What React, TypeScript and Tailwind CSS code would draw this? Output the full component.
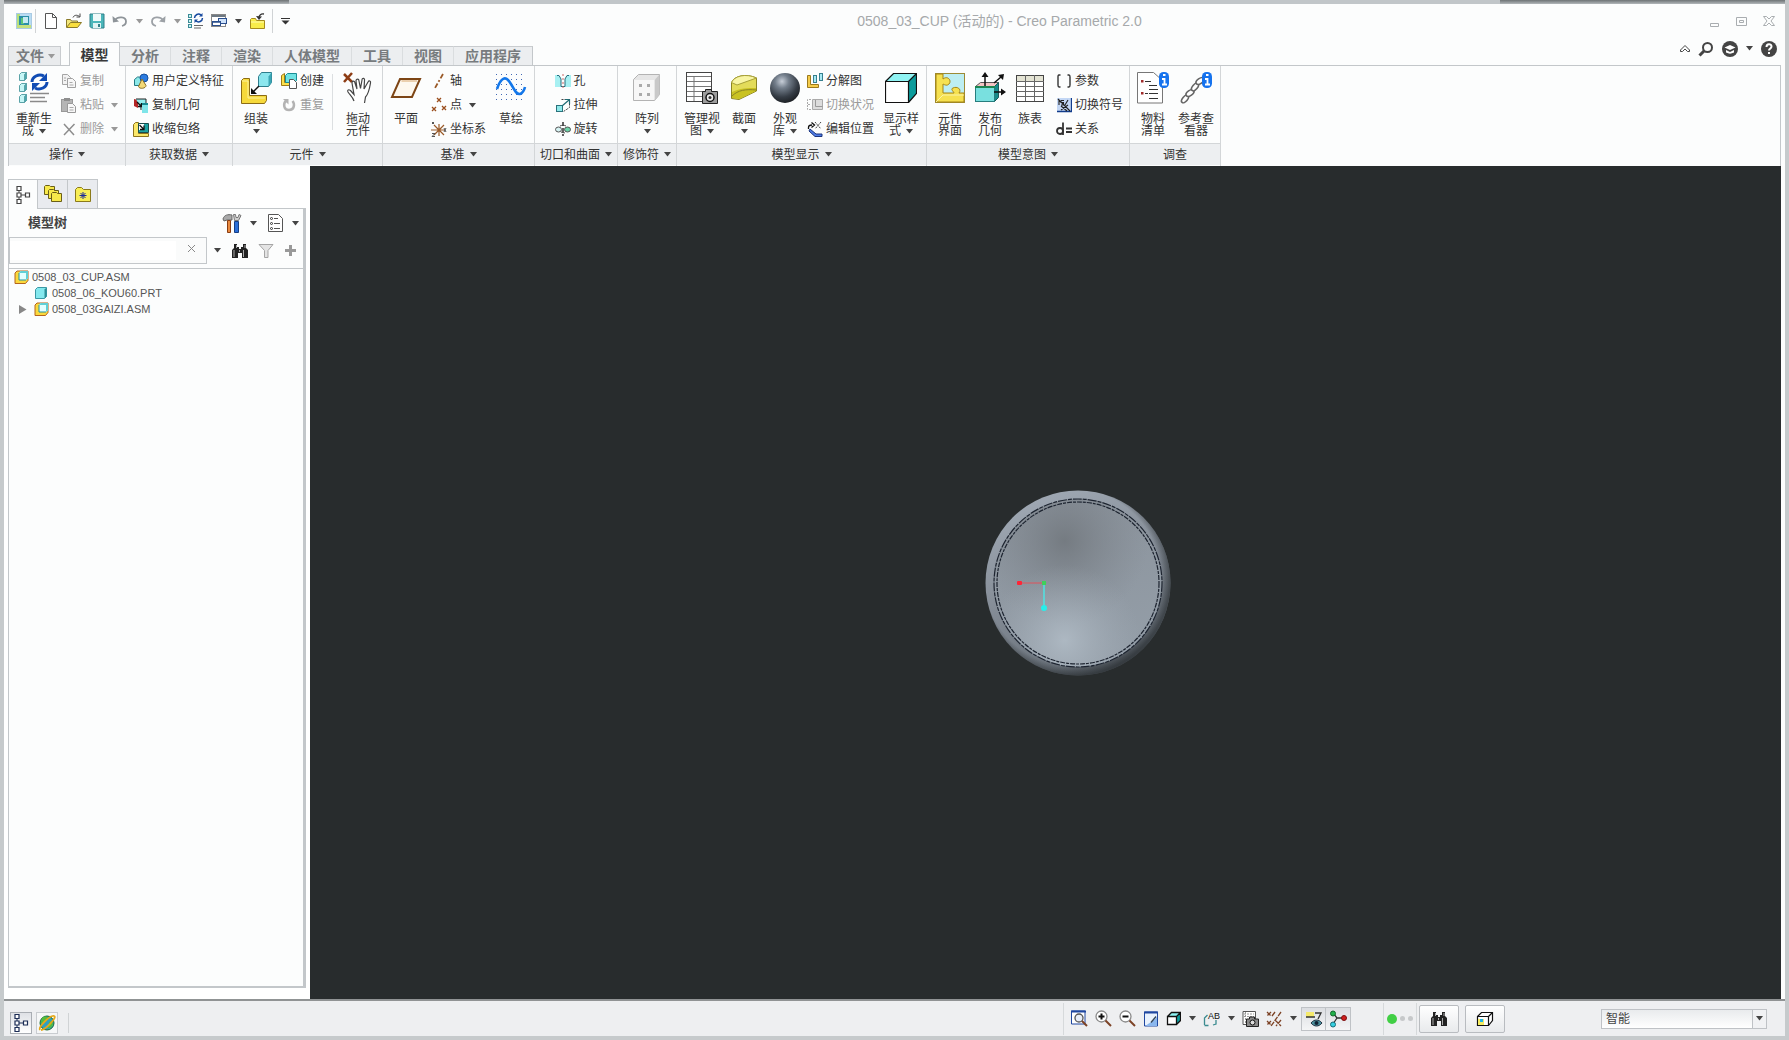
import type { ReactNode } from "react";
import clsx from "clsx";

type IconProps = { w?: number; h?: number; children: ReactNode };

function Svg({ w = 16, h = 16, children }: IconProps) {
  return (
    <svg width={w} height={h} viewBox={`0 0 ${w} ${h}`} fill="none" className="shrink-0" aria-hidden="true">
      {children}
    </svg>
  );
}

function Caret({ muted = false }: { muted?: boolean }) {
  return (
    <svg width="7" height="5" viewBox="0 0 7 5" className={clsx("shrink-0", muted ? "text-[#999]" : "text-[#444]")} aria-hidden="true">
      <path d="M0 0h7L3.5 4.5z" fill="currentColor" />
    </svg>
  );
}

/* ---------- quick access icons ---------- */

const AppIcon = () => (
  <Svg>
    <rect x=".5" y=".5" width="15" height="15" fill="#b9dcf3" stroke="#a9cbe4" />
    <path d="M1 1h3v14H1z" fill="#b5e07c" />
    <path d="M1 12h14v3H1z" fill="#c4e07c" />
    <rect x="3" y="3" width="10" height="9" fill="#2a8fa8" />
    <rect x="5" y="5" width="3" height="6" fill="#5cc47a" />
    <rect x="7" y="4" width="5" height="6" fill="#c5ebf3" />
  </Svg>
);

const NewIcon = () => (
  <Svg w={14}>
    <path d="M1.500.5h7l4 4v11h-11z" fill="#fff" stroke="#555" />
    <path d="M8.500 .5v4h4" stroke="#555" />
  </Svg>
);

const OpenIcon = () => (
  <Svg w={17}>
    <path d="M1.500 14V6.500h4l1 1.500h6v2" fill="#f4e87c" stroke="#8a7a2a" />
    <path d="M1.500 14.500l4-5h11l-4 5z" fill="#f9de3e" stroke="#8a7a2a" />
    <path d="M8 4.500c1-2.500 4-3 6.500-1M15 .5v3.500h-3.500" stroke="#444" />
  </Svg>
);

const SaveIcon = () => (
  <Svg>
    <path d="M1 1h14v14H2.500L1 13.500z" fill="#4bb6ba" stroke="#2f7f88" />
    <rect x="4" y="1" width="8" height="7" fill="#effafa" />
    <rect x="4" y="10" width="8" height="5" fill="#dff3f3" />
    <rect x="9" y="11" width="2" height="3" fill="#2f7f88" />
  </Svg>
);

const UndoIcon = () => (
  <Svg>
    <path d="M3 7c3-4 11-3.500 11 1.500 0 2.500-2 4-4 4.500" stroke="#8e9499" strokeWidth="1.800" />
    <path d="M.5 3l.5 6.500 6-1z" fill="#8e9499" />
  </Svg>
);

const RedoIcon = () => (
  <Svg>
    <path d="M13 7C10 3 2 3.500 2 8.500c0 2.500 2 4 4 4.500" stroke="#9ca1a6" strokeWidth="1.800" />
    <path d="M15.500 3L15 9.500l-6-1z" fill="#9ca1a6" />
  </Svg>
);

const RegenSmallIcon = () => (
  <Svg>
    {[1, 6, 11].map((y) => (
      <rect key={y} x=".5" y={y + 0.5} width="3" height="3" fill="#cdf4f4" stroke="#3a8a96" />
    ))}
    <path d="M6.500 5a4 4 0 0 1 6.500-3M14.500 5a4 4 0 0 1-6.500 3" stroke="#15489f" strokeWidth="1.500" />
    <path d="M14.500 0v3.500H11zM6.500 10V6.500H10z" fill="#15489f" />
    <path d="M6 12.500h9M6 15h7" stroke="#666" />
  </Svg>
);

const WindowsIcon = () => (
  <Svg>
    <rect x=".5" y="1.500" width="14" height="12" fill="#fff" stroke="#888" />
    <path d="M1 2h13v2H1z" fill="#6d7882" />
    <rect x="7.500" y="5.500" width="8" height="5" fill="#cfe3fb" stroke="#2a4f8e" />
    <rect x="1.500" y="8.500" width="8" height="4" fill="#fff" stroke="#2a4f8e" />
    <path d="M1 9h9" stroke="#2a4f8e" strokeWidth="1.500" />
  </Svg>
);

const CloseFolderIcon = () => (
  <Svg w={17}>
    <path d="M1.500 15.500v-9l1-1h4l1 2h8v8z" fill="#f8ec4a" stroke="#a68b1c" />
    <path d="M2 9h13" stroke="#fffbb0" />
    <path d="M15 1c-3-.5-5 1-5 4" stroke="#333" strokeWidth="1.300" />
    <path d="M7 3l3 4L13 3.500z" fill="#333" />
  </Svg>
);

/* ---------- small ribbon icons ---------- */

const CopyIcon = () => (
  <Svg>
    <path d="M1.500 1.500h5l3 3v7h-8z" fill="#f2f2f2" stroke="#a5a5a5" />
    <path d="M6.500 5.500h5l3 3v6h-8z" fill="#f7f7f7" stroke="#a0a0a0" />
    <path d="M8.500 9.500h3M8.500 12h4M3 5h2M3 7.500h2" stroke="#aaa" />
  </Svg>
);

const PasteIcon = () => (
  <Svg>
    <rect x=".5" y="2.500" width="11" height="12" fill="#b5b5b5" stroke="#999" />
    <rect x="3" y="1" width="6" height="3" fill="#8e8e8e" />
    <path d="M6.500 6.500h5l3 3v6h-8z" fill="#f7f7f7" stroke="#999" />
    <path d="M8.500 10.500h4M8.500 13h4" stroke="#aaa" />
  </Svg>
);

const DeleteIcon = () => (
  <Svg>
    <path d="M3 3l10 11M13.500 3L3 14" stroke="#8d8d8d" strokeWidth="1.500" />
  </Svg>
);

const UserFeatureIcon = () => (
  <Svg>
    <path d="M1.500 6.500l3-2.500h6v6l-3 2.500h-6z" fill="#8ce9e9" stroke="#247b85" />
    <circle cx="11" cy="5" r="4" fill="#2b7be0" stroke="#174f9c" />
    <path d="M5.500 13.500L9 6l4 6.500c0 3-6.500 4-7.500 1z" fill="#f3d977" stroke="#8a6f23" />
  </Svg>
);

const CopyGeomIcon = () => (
  <Svg>
    <path d="M1 2l4 1v8l-4-2z" fill="#b32626" />
    <path d="M3 2h10v5H8v6" stroke="#222" fill="#92ecec" />
    <path d="M4 5l4 4M8.500 6v3.500H5" stroke="#111" strokeWidth="1.300" />
    <path d="M9 7h6v9H9z" fill="#7fe5e9" />
    <path d="M9 7h6" stroke="#168b93" strokeWidth="2" />
  </Svg>
);

const ShrinkIcon = () => (
  <Svg>
    <path d="M.5 3.500l2-2h3v11h10v3H.5z" fill="#fbe86a" stroke="#8d741c" />
    <path d="M5.500 2.500h10v9h-10z" fill="#1ca2a2" stroke="#1a4d4d" />
    <rect x="6" y="3" width="5" height="6" fill="#fff" />
    <path d="M6.500 4l4 4M11 4.500V8.500H7" stroke="#111" strokeWidth="1.300" />
  </Svg>
);

const CreateIcon = () => (
  <Svg>
    <path d="M.5 2.500l3-2v9h8v3H.5z" fill="#fbe04b" stroke="#a07a14" />
    <path d="M4.500 2.500l2-2h9v7l-2 2h-9z" fill="#6fe3e3" stroke="#1b8d94" />
    <path d="M8.500 6.500h4l3 3v6h-7z" fill="#fff" stroke="#555" />
  </Svg>
);

const RepeatIcon = () => (
  <Svg>
    <path d="M5 4C2 6.500 2.500 13 8 13s6-6 3.500-9" stroke="#b3b3b3" strokeWidth="2.500" />
    <path d="M2 2h5.500v5.500z" fill="#b3b3b3" />
  </Svg>
);

const AxisIcon = () => (
  <Svg>
    <path d="M12 1L4 15" stroke="#9a5a28" strokeWidth="1.800" strokeDasharray="5 2 2 2" />
  </Svg>
);

const PointIcon = () => (
  <Svg>
    <path d="M6 1l4 4M10 1L6 5M1 10l4 4M5 10l-4 4M11 9l4 4M15 9l-4 4" stroke="#9a4d1c" strokeWidth="1.300" />
  </Svg>
);

const CsysIcon = () => (
  <Svg>
    <path d="M0 9h14M8 3v12M3 4l10 10M13 4L3 14" stroke="#9a5a28" strokeWidth="1.200" />
    <path d="M1 1l2 2M3 1L1 3M13 7l2 4M15 7l-2 4M1 12.500h3l-3 3h3" stroke="#555" />
  </Svg>
);

const HoleIcon = () => (
  <Svg>
    <path d="M0 2h16v12H0z" fill="#a7f0f2" />
    <path d="M3 1h10L10 6v7H6V6z" fill="#fcfdfd" />
    <path d="M2 2.500h2L6 6v7.500h4V6l2-3.500h2" stroke="#256e7c" />
    <path d="M8 1v14" stroke="#c66" strokeDasharray="2 2" />
  </Svg>
);

const ExtrudeIcon = () => (
  <Svg>
    <rect x="1.500" y="8.500" width="6" height="6" fill="#8fe9ea" stroke="#2a727c" />
    <path d="M6.500 2.500h8v8l-6 4" stroke="#444" strokeDasharray="2 1" />
    <path d="M7 9l7-6M10 2.500h4.500V7" stroke="#1f6b74" strokeWidth="1.200" />
  </Svg>
);

const RevolveIcon = () => (
  <Svg>
    <ellipse cx="3.500" cy="8.500" rx="3" ry="2.500" fill="#d5f2f2" stroke="#555" />
    <ellipse cx="12.500" cy="8.500" rx="3" ry="2.500" fill="#6cd3a8" stroke="#555" />
    <path d="M8 1v14" stroke="#111" strokeDasharray="4 2" strokeWidth="1.300" />
    <path d="M5 5c2-1 4-1 6 0M6 11l4 1" stroke="#444" />
  </Svg>
);

const ExplodeIcon = () => (
  <Svg>
    <path d="M.5 2.500h3v9h8v3H.5z" fill="#f5cc4b" stroke="#9c7a1d" />
    <rect x="6.500" y="2.500" width="3" height="7" fill="#a9e9f3" stroke="#37808f" />
    <rect x="12.500" y=".5" width="3" height="7" fill="#a9e9f3" stroke="#37808f" />
  </Svg>
);

const StatusIcon = () => (
  <Svg>
    <path d="M4 2.500H.5v10H4M1 7.500h3" stroke="#aaa" strokeDasharray="2 1" />
    <path d="M5.500 2.500h10v10h-10z" fill="#dcdcdc" stroke="#aaa" />
    <path d="M8.500 3v6.500h7" stroke="#999" />
  </Svg>
);

const EditPosIcon = () => (
  <Svg>
    <path d="M1.500 8V6.500C1.500 4.500 3 4 5 4M4.500 1.500L7.500 4l-3 2.500" stroke="#111" strokeWidth="1.300" />
    <path d="M8 1l6 7M14 1L8 8" stroke="#444" strokeDasharray="2 1" />
    <path d="M3 8l6 5h6v2.500H8L2 10z" fill="#4e7be6" stroke="#1b357d" />
  </Svg>
);

const ParamIcon = () => (
  <Svg>
    <path d="M4.500 2H3c-1 0-1 1-1 2v8c0 1 0 2 1 2h1.500M11.500 2H13c1 0 1 1 1 2v8c0 1 0 2-1 2h-1.500" stroke="#333" strokeWidth="1.400" />
  </Svg>
);

const SymbolIcon = () => (
  <Svg>
    <rect x="1" y="1" width="14" height="14" fill="#c3d7f5" />
    <path d="M1 14.500h14.500V1" stroke="#123c8c" strokeWidth="1.300" />
    <path d="M3 3v5M5 3.500h3M5 3.500v2h2.500v2.500H5M12 3l-3 5M5 9l6 5M12 8l-7 5M2 2l12 12" stroke="#222" strokeWidth="1.100" />
  </Svg>
);

const RelationIcon = () => (
  <Svg>
    <circle cx="4" cy="10" r="3" stroke="#333" strokeWidth="1.800" />
    <path d="M7 1.500V14M10 7.500h6M10 11h6" stroke="#333" strokeWidth="1.800" />
  </Svg>
);

/* ---------- large ribbon icons ---------- */

const RegenIcon = () => (
  <Svg w={32} h={32}>
    {[1, 12, 23].map((y) => (
      <g key={y} stroke="#5aa3a8">
        <path d={`M1.500 ${y + 1.5}l2-2h5v6l-2 2h-5z`} fill="#c6f6f6" />
        <path d={`M6.500 ${y + 1.5}l2-2v6l-2 2z`} fill="#4ba9ae" />
      </g>
    ))}
    <path d="M14 10a8 7 0 0 1 12-6M29 10a8 7 0 0 1-12 6" stroke="#114cb4" strokeWidth="3" />
    <path d="M29 1v8h-8zM14 19v-8h8z" fill="#114cb4" />
    <path d="M12 21.500h19M12 25.500h15M12 29.500h17" stroke="#8a8a8a" strokeWidth="1.500" />
  </Svg>
);

const AssembleIcon = () => (
  <Svg w={32} h={32}>
    <path d="M1.500 8.500l2-2h6v17h17v5l-2 3h-23z" fill="#f6d93b" stroke="#8c6c15" />
    <path d="M2 9h6v17h17" stroke="#fdf3a0" />
    <path d="M18.500 4.500l3-4h10v10l-3 4h-10z" fill="#8be6ee" stroke="#2d7d8c" />
    <path d="M28.500 4.500l3-4v10l-3 4z" fill="#3ba6b5" />
    <path d="M19 14l-6 6" stroke="#111" strokeWidth="1.500" />
    <path d="M11 16v6h6z" fill="#111" />
  </Svg>
);

const DragIcon = () => (
  <Svg w={32} h={32}>
    <path d="M2 2l8 8M10 1L2 10" stroke="#8d3d15" strokeWidth="2.500" />
    <path
      d="M12 29c-1-4-4-6-6-9-1-2 .5-3 2.500-1.500l3.500 4L10 11c0-2.500 2.500-2.500 3 0l2 6-1-8c0-2.500 3-2.500 3 0l1.500 7.500L20 8c0-2.500 3-2 2.500.5l-.5 8.500 4-7c1-2 3-1 2.500 1-1 6-2 11-5 14l-1 6"
      fill="#fff"
      stroke="#444"
      strokeWidth="1.200"
    />
  </Svg>
);

const PlaneIcon = () => (
  <Svg w={32} h={32}>
    <path d="M10 7h20l-8 18H2z" fill="#fdf8ef" stroke="#7d4515" strokeWidth="2" />
    <path d="M11.500 9h15.500" stroke="#d9a76e" />
  </Svg>
);

const SketchIcon = () => (
  <Svg w={32} h={32}>
    {[2, 7, 12, 17, 22, 27].map((y) => (
      <path key={y} d={`M1 ${y}.5h30`} stroke="#4068b5" strokeDasharray="1 4" />
    ))}
    <path d="M2 17C5 8 9 4 13 8c5 5 7 15 12 14 3-1 4-3 5-7" stroke="#1377ea" strokeWidth="2.600" />
  </Svg>
);

const PatternIcon = () => (
  <Svg w={32} h={32}>
    <path d="M2.500 7.500l5-5h21v20l-5 6h-21z" fill="#e6e6e6" stroke="#b3b3b3" />
    <path d="M24 7.500l4.500-5v20l-4.500 6z" fill="#c9c9c9" />
    <rect x="3" y="8" width="20" height="20" fill="#f7f7f7" />
    {[[8, 12], [16, 12], [8, 21], [16, 21]].map(([x, y]) => (
      <rect key={`${x}-${y}`} x={x} y={y} width="3" height="3" fill="#aaa" />
    ))}
  </Svg>
);

const ManageViewIcon = () => (
  <Svg w={32} h={32}>
    <rect x=".5" y=".5" width="25" height="29" fill="#fff" stroke="#444" />
    <path d="M1 4.500h24M1 9.500h24M1 14.500h24M1 19.500h24M1 24.500h15M8 4v25" stroke="#777" />
    <path d="M16.500 19.500h3v-2h6v2h6v12h-15z" fill="#9c9c9c" stroke="#222" />
    <circle cx="24" cy="25.500" r="4" fill="#eee" stroke="#111" strokeWidth="1.500" />
    <circle cx="24" cy="25.500" r="1.500" fill="#333" />
  </Svg>
);

const SectionIcon = () => (
  <Svg w={32} h={32}>
    <path d="M3.500 10.500C6 4 18 1 28.500 6v13L11 27.500l-7.500-1z" fill="#e3dc5a" stroke="#8b8424" />
    <path d="M3.500 10.500C6 4 18 1 28.500 6L9 13z" fill="#f8f5a4" stroke="#a8a138" />
    <path d="M4 20c8-4 16-4 24-4v3L11 27l-7-1z" fill="#c9c221" />
    <path d="M4 24c6-6 14-7 24-6" stroke="#8b8424" />
  </Svg>
);

const SphereIcon = () => (
  <Svg w={32} h={32}>
    <defs>
      <radialGradient id="sphere" cx=".4" cy=".28" r=".75">
        <stop offset="0" stopColor="#c7ced8" />
        <stop offset=".3" stopColor="#747f8c" />
        <stop offset=".7" stopColor="#353c45" />
        <stop offset="1" stopColor="#1b1e22" />
      </radialGradient>
    </defs>
    <circle cx="16" cy="16" r="15" fill="url(#sphere)" />
  </Svg>
);

const CubeIcon = () => (
  <Svg w={32} h={32}>
    <path d="M0 9.500l8-8h23.500l-8 8z" fill="#8ff3f3" />
    <path d="M23.500 9.500l8-8v20l-8 9z" fill="#0b9c9c" />
    <path d="M.5 9.500h23v21H.5z" fill="#fff" />
    <path d="M.5 9.500h23v21H.5zM.5 9.500l8-8h23v20l-8 9M23.500 9.500l8-8" stroke="#111" strokeWidth="1.200" />
  </Svg>
);

const ComponentUiIcon = () => (
  <Svg w={32} h={32}>
    <rect x="1.500" y="1.500" width="29" height="29" fill="#bdeef2" stroke="#9c8b36" />
    <path
      d="M2 2h7v5c5-4 9 2 6 5-2 2-4 1-6 0v9h11c0-1-4-4-1-5 4-2 9 1 6 5h5v9H2z"
      fill="#f6e150"
      stroke="#a58515"
    />
    <path d="M2 30l7-7h21" stroke="#fbf3a5" />
  </Svg>
);

const PublishIcon = () => (
  <Svg w={32} h={32}>
    <path d="M1.500 14.500l5-4h18l-4 4z" fill="#f5c4c4" stroke="#555" />
    <path d="M20.500 14.500l4-4v15l-4 4z" fill="#178a8a" stroke="#1a5a5a" />
    <rect x="1.500" y="14.500" width="19" height="15" fill="#79e0df" stroke="#277e7e" />
    <path d="M1 15h20" stroke="#1d8552" strokeWidth="2" />
    <path d="M11 14V3M20 11l7-6M20 20h9" stroke="#111" strokeWidth="1.500" />
    <path d="M11 0l3.500 5h-7zM30 2l-1 6-5-5zM32 20l-5 3.500v-7z" fill="#111" />
  </Svg>
);

const FamilyTableIcon = () => (
  <Svg w={32} h={32}>
    <rect x="2.500" y="3.500" width="27" height="26" fill="#fff" stroke="#444" />
    <path d="M3 4h26v5H3z" fill="#e3e3d3" />
    <path d="M2 9.500h28M2 14.500h28M2 19.500h28M2 24.500h28M11.500 3v26M20.500 3v26" stroke="#666" />
  </Svg>
);

const InfoBadge = () => (
  <>
    <rect x="22" y="0" width="10" height="16" rx="4.500" fill="#1673ee" />
    <path d="M26 3h2.500M25 7h2.500v5.500M25 12.500h5" stroke="#fff" strokeWidth="1.800" />
  </>
);

const BomIcon = () => (
  <Svg w={32} h={32}>
    <path d="M.5.500h16l9 8v22.500H.5z" fill="#fff" stroke="#777" />
    <path d="M8 9.500h6M12 13.500h8M12 17.500h9M8 21.500h3M12 21.500h9M12 26.500h9" stroke="#333" />
    <path d="M4 8h2.500v2.500H4zM4 20h2.500v2.500H4z" fill="#a02c2c" />
    <InfoBadge />
  </Svg>
);

const RefViewerIcon = () => (
  <Svg w={32} h={32}>
    <g stroke="#666" strokeWidth="1.600" fill="#fff">
      <ellipse cx="5" cy="27" rx="4.500" ry="2.500" transform="rotate(-50 5 27)" />
      <ellipse cx="10" cy="21" rx="4.500" ry="2.500" transform="rotate(-35 10 21)" />
      <ellipse cx="15" cy="15" rx="4.500" ry="2.500" transform="rotate(-50 15 15)" />
      <ellipse cx="20" cy="9" rx="4.500" ry="2.500" transform="rotate(-35 20 9)" />
    </g>
    <InfoBadge />
  </Svg>
);

/* ---------- tree and status icons ---------- */

const TreeIcon = ({ color = "#444" }: { color?: string }) => (
  <Svg w={16} h={20}>
    <path d="M4 5v3M4 12v3M6 10h4" stroke={color} />
    <path d="M2 1.500h4v4H2zM2 8h4v4H2zM2 14.500h4v4H2zM10.500 8h4v4h-4z" fill="#fff" stroke={color} strokeWidth="1.200" />
  </Svg>
);

const FoldersIcon = () => (
  <Svg w={20} h={20}>
    {[0, 4, 7].map((d) => (
      <path key={d} d={`M${d + 1}.5 ${d + 10}.5v-8l1-1h4l1 1h4v8z`} fill="#f8e94a" stroke="#6b5f17" />
    ))}
  </Svg>
);

const FavFolderIcon = () => (
  <Svg w={18} h={18}>
    <path d="M1.500 16.500v-12l2-2h4l2 2h7v12z" fill="#f8ee55" stroke="#8b7a1b" />
    <path d="M9 7v7M5.500 10.500h7M6.500 8l5 5M11.500 8l-5 5" stroke="#1b2b9a" />
  </Svg>
);

const ToolsIcon = () => (
  <Svg w={20} h={20}>
    <path d="M1 6c1-4 5-5 9-4v5H5L2 8z" fill="#a9a9a9" stroke="#666" />
    <path d="M5.500 7.500h3v12h-3z" fill="#e98a3f" stroke="#8a3d11" />
    <path d="M12.500 8.500h4v11h-4z" fill="#2b6fd8" stroke="#173f85" />
    <path d="M11.500 1.500l1 6h4l2.500-5-2-1-1 3h-2l-.5-3z" fill="#cfcfcf" stroke="#777" />
  </Svg>
);

const TreeSettingsIcon = () => (
  <Svg w={17} h={20}>
    <path d="M1.500 1.500h10l4 4v13h-14z" fill="#fff" stroke="#555" />
    <path d="M7 5.500h4M7 10.500h6M7 15.500h6" stroke="#555" />
    <circle cx="4.500" cy="5.500" r="1" stroke="#333" />
    <circle cx="4.500" cy="10.500" r="1" stroke="#333" />
    <circle cx="4.500" cy="15.500" r="1" stroke="#333" />
  </Svg>
);

const BinocularsIcon = () => (
  <Svg w={18}>
    <path d="M3 5V1h3v3h2v2h2V4h2V1h3v4l2 2v8h-6v-5H7v5H1V7z" fill="#222" />
    <path d="M3 7v7M5.500 2v3M12.500 7v7M14 2v3M8.500 7v2" stroke="#aaa" />
  </Svg>
);

const FunnelIcon = () => (
  <Svg>
    <path d="M1 1.500h14l-5 6v7H6.500v-7z" fill="#e4e4e4" stroke="#a5a5a5" />
  </Svg>
);

const PlusIcon = () => (
  <Svg w={13} h={13}>
    <path d="M5 1h3v4h4v3H8v4H5V8H1V5h4z" fill="#999" />
  </Svg>
);

const AsmIcon = () => (
  <Svg w={15} h={14}>
    <path d="M1 3l2-2h11v9.500L11.500 13.500H1z" fill="#fbd93d" stroke="#b5651d" />
    <path d="M5 3l1.500-2H14v7.500L12 10H5z" fill="#e2ffff" />
    <path d="M5 3l1.500-2H14l-2 2zM12 3l2-2v7.500L12 10z" fill="#5fd0d6" />
    <path d="M5 3v7h7" stroke="#25929c" />
  </Svg>
);

const PartIcon = () => (
  <Svg w={15} h={14}>
    <path d="M1.500 3.500L3.500 1.500h9v9l-2 2h-9z" fill="#84e8ee" stroke="#3b98a5" />
    <path d="M10.500 3.500l2-2v9l-2 2z" fill="#2a8e97" />
  </Svg>
);

const GlobeIcon = () => (
  <Svg w={18} h={18}>
    <circle cx="9" cy="9" r="7" fill="#2f9fc1" stroke="#1b6d2e" />
    <path d="M4 4c2-2 5-2 6 0s-3 3-4 5-3 1-3-1zM11 8c2-1 4 0 4 2s-3 5-5 4z" fill="#55bd3c" />
    <path d="M2 16C0 13 12 1 16 2s-9 14-13 14" stroke="#e6a817" strokeWidth="1.800" />
  </Svg>
);

const Magnifier = ({ sign }: { sign: string }) => (
  <Svg w={17} h={17}>
    <circle cx="6.500" cy="6.500" r="5.500" fill="#fff" stroke="#8b8b8b" strokeWidth="1.300" />
    <path d={sign} stroke="#111" strokeWidth="2" />
    <path d="M10.500 10.500l5.500 5.500" stroke="#7d4326" strokeWidth="2" />
  </Svg>
);

const RefitIcon = () => (
  <Svg w={17} h={17}>
    <path d="M.5 1h13.500v13H.5z" fill="#fff" stroke="#1f47a0" />
    <path d="M0 1.500h15" stroke="#1f47a0" strokeWidth="2" />
    <circle cx="8" cy="8" r="4" fill="#e8eef8" stroke="#555" strokeWidth="1.300" />
    <path d="M11 11l5 5" stroke="#7d4326" strokeWidth="2" />
  </Svg>
);

const RepaintIcon = () => (
  <Svg>
    <path d="M1.500 1h13v14h-13z" fill="#e9f2fd" stroke="#1f47a0" />
    <path d="M1 1.500h14" stroke="#1f47a0" strokeWidth="2" />
    <path d="M3 15c2-3 7-4 11-9v9z" fill="#8ab7ee" />
    <path d="M8 11.500l5-6" stroke="#345" strokeWidth="1.300" />
  </Svg>
);

const SmallCubeIcon = () => (
  <Svg w={15} h={15}>
    <path d="M1.500 5.500l4-4h9l-4 4z" fill="#8ff3f3" />
    <path d="M10.500 5.500l4-4v8l-4 4z" fill="#0b9c9c" />
    <path d="M1.500 5.500h9v8h-9z" fill="#fff" />
    <path d="M1.500 5.500h9v8h-9zM1.500 5.500l4-4h9v8l-4 4M10.500 5.500l4-4" stroke="#111" strokeWidth="1.300" />
  </Svg>
);

const SavedViewsIcon = () => (
  <svg width="17" height="16" viewBox="0 0 17 16" fill="none" className="shrink-0" aria-hidden="true">
    <path d="M1.500 14V7l3-3M1.500 14.500h4M13 9v4l-3 1" stroke="#3b8b90" strokeWidth="1.300" />
    <text x="5" y="8" fontSize="9" fontFamily="Liberation Sans, sans-serif" fill="#111">AB</text>
  </svg>
);

const CameraListIcon = () => (
  <Svg w={17}>
    <path d="M1 .5h12.500v13H1z" fill="#fff" stroke="#555" />
    <path d="M2 3h10M2 5.500h10M3.500 1v12" stroke="#999" strokeDasharray="2 1" />
    <path d="M4.500 8h3V6h5v2h4v7.500h-12z" fill="#8b8b8b" stroke="#222" />
    <circle cx="10.500" cy="11.500" r="2.500" fill="#ddd" stroke="#111" />
  </Svg>
);

const DatumIcon = () => (
  <Svg>
    <path d="M1 1l4 4M5 1L1 5M15 1L5 15M1 10l4 4M5 10l-4 4M9 9l6 6M15 9l-5 6M9 1l-3 4" stroke="#7d4326" strokeWidth="1.300" strokeDasharray="5 1" />
  </Svg>
);

const AnnotationIcon = () => (
  <Svg w={18} h={18}>
    <path d="M1 2h8v5H1z" fill="#f5e96b" />
    <path d="M1 7h9M10 3h6l-3 6" stroke="#333" strokeWidth="1.300" />
    <path d="M6 13c3-4 8-4 11 0-3 4-8 4-11 0z" fill="#4a8f9c" stroke="#234" />
    <circle cx="11.500" cy="13" r="2" fill="#123" />
  </Svg>
);

const SpinCenterIcon = () => (
  <Svg w={18} h={18}>
    <path d="M4 3l4 5h6M8 8l-4 6" stroke="#333" strokeWidth="1.300" />
    <circle cx="4" cy="3.500" r="2.500" fill="#22b14c" stroke="#136b2d" />
    <circle cx="15" cy="8" r="2.500" fill="#d01f1f" stroke="#7d1010" />
    <circle cx="4" cy="14.500" r="2.500" fill="#36cfe0" stroke="#176c78" />
  </Svg>
);

const SelectBoxIcon = () => (
  <Svg w={18}>
    <path d="M1.500 5.500l4-4h11v8l-4 5h-11z" fill="#fff" stroke="#111" strokeWidth="1.200" />
    <rect x="2" y="8" width="6" height="6" fill="#f6ec62" />
    <rect x="4" y="8" width="3" height="3" fill="#1fb6e8" />
    <path d="M1.500 5.500h11v9M12.500 5.500l4-4" stroke="#111" strokeWidth="1.200" />
  </Svg>
);

/* ---------- ribbon building blocks ---------- */

function Group({ title, menu = true, className, children }: { title: string; menu?: boolean; className?: string; children: ReactNode }) {
  return (
    <section className="flex flex-col border-r border-[#d3d6d8]">
      <div className={clsx("flex h-[77px] items-start", className)}>{children}</div>
      <button className="flex h-[22px] items-center justify-center gap-[5px] border-t border-[#d3d6d8] bg-[#edeff1] px-[5px] text-[#333]">
        {title}
        {menu && <Caret />}
      </button>
    </section>
  );
}

function Big({ icon, lines, menu = false, narrow = false }: { icon: ReactNode; lines: string[]; menu?: boolean; narrow?: boolean }) {
  return (
    <button className={clsx("flex flex-col items-center pt-1.5 leading-3", narrow ? "w-10" : "w-[42px]")}>
      {icon}
      <span className="mt-[9px] flex h-3 items-center whitespace-nowrap">{lines[0]}</span>
      <span className="flex h-3 items-center gap-[5px] whitespace-nowrap">
        {lines[1]}
        {menu && <Caret />}
      </span>
    </button>
  );
}

type SmallItem = { icon: ReactNode; label: string; menu?: boolean; off?: boolean };

function SmallColumn({ items, className }: { items: SmallItem[]; className?: string }) {
  return (
    <div className={clsx("flex flex-col pt-[3px]", className)}>
      {items.map((item) => (
        <button
          key={item.label}
          disabled={item.off}
          className={clsx("flex h-6 items-center gap-[3px] whitespace-nowrap", item.off && "text-[#9a9a9a]")}
        >
          {item.icon}
          {item.label}
          {item.menu && (
            <span className="ml-1">
              <Caret muted={item.off} />
            </span>
          )}
        </button>
      ))}
    </div>
  );
}

const tabs = ["分析", "注释", "渲染", "人体模型", "工具", "视图", "应用程序"];

function TitleBar() {
  return (
    <header className="flex h-[34px] items-center pl-3 pr-2.5">
      <AppIcon />
      <span className="ml-[3px] h-6 w-px bg-[#d0d3d5]" />
      <div className="ml-2 flex items-center gap-[7px]">
        <button aria-label="新建"><NewIcon /></button>
        <button aria-label="打开"><OpenIcon /></button>
        <button aria-label="保存"><SaveIcon /></button>
        <button aria-label="撤消" className="flex items-center gap-2"><UndoIcon /><Caret muted /></button>
        <button aria-label="重做" className="flex items-center gap-2"><RedoIcon /><Caret muted /></button>
        <button aria-label="重新生成"><RegenSmallIcon /></button>
        <button aria-label="窗口" className="flex items-center gap-2"><WindowsIcon /><Caret /></button>
        <button aria-label="关闭窗口"><CloseFolderIcon /></button>
      </div>
      <span className="ml-1.5 h-6 w-px bg-[#d0d3d5]" />
      <button aria-label="自定义" className="ml-2">
        <Svg w={9} h={7}>
          <path d="M0 .5h9" stroke="#333" />
          <path d="M.5 2.500h8l-4 4z" fill="#333" />
        </Svg>
      </button>
      <h1 className="flex-1 text-center text-sm text-[#a6a9ab]">0508_03_CUP (活动的) - Creo Parametric 2.0</h1>
      <div className="flex items-center gap-4 text-[#a9adb0]">
        <button aria-label="最小化">
          <Svg w={11} h={11}><path d="M1.500 7.500h8v3h-8z" stroke="currentColor" /></Svg>
        </button>
        <button aria-label="还原">
          <Svg w={11} h={9}><path d="M.5.500h10v8H.5zM3.500 3.500h4v2h-4z" stroke="currentColor" /></Svg>
        </button>
        <button aria-label="关闭">
          <Svg w={12} h={10}>
            <path d="M.5.500h3L6 3 8.500.5h3L8 5l3.500 4.500h-3L6 7 3.500 9.500h-3L4 5z" stroke="currentColor" />
          </Svg>
        </button>
      </div>
    </header>
  );
}

function TabBar() {
  return (
    <nav className="flex h-[27px] items-end pl-1 pr-2 text-sm font-bold text-[#777b7e]">
      <button className="flex h-[19px] w-[53px] items-center gap-1 border border-b-0 border-[#c9cccf] bg-[#e9ebed] pl-[7px]">
        文件
        <Caret muted />
      </button>
      <button className="relative z-10 -mb-px ml-2 flex h-6 w-[51px] items-center justify-center border border-b-0 border-[#c3c7ca] bg-[#fcfdfd] text-[#3a3a3a]">
        模型
      </button>
      {tabs.map((tab) => (
        <button key={tab} className="flex h-[19px] items-center border-r border-t border-r-[#dadddf] border-t-[#c9cccf] bg-[#eceef0] px-[11px] last-of-type:border-r-[#c3c7ca]">
          {tab}
        </button>
      ))}
      <div className="ml-auto flex h-full items-center gap-2 pb-1.5 text-[#444]">
        <button aria-label="最小化功能区">
          <Svg w={10} h={8}><path d="M.5 5L5 .5 9.500 5v1.500h-2L5 4 2.500 6.500h-2z" stroke="currentColor" /></Svg>
        </button>
        <button aria-label="搜索">
          <Svg>
            <circle cx="9.500" cy="6.500" r="4.500" stroke="currentColor" strokeWidth="2" />
            <path d="M6 10l-4.500 4.500" stroke="currentColor" strokeWidth="3" />
          </Svg>
        </button>
        <button aria-label="学习" className="flex items-center gap-2">
          <Svg>
            <circle cx="8" cy="8" r="8" fill="currentColor" />
            <path d="M2.500 6.500L8 4l5.500 2.500L8 9zM4 9v2.500c3 1.500 5 1.500 8 0V9l-4 2z" fill="#fff" />
          </Svg>
          <Caret />
        </button>
        <button aria-label="帮助">
          <Svg>
            <circle cx="8" cy="8" r="8" fill="currentColor" />
            <path d="M5.500 6c0-3.500 5-3.500 5-.5 0 2-2.500 2-2.500 4M8 11v2" stroke="#fff" strokeWidth="2" />
          </Svg>
        </button>
      </div>
    </nav>
  );
}

function Ribbon() {
  return (
    <div className="mx-1 flex h-[101px] border border-b-0 border-[#c3c7ca]">
      <Group title="操作" className="pl-1 pr-[7px]">
        <Big icon={<RegenIcon />} lines={["重新生", "成"]} menu />
        <SmallColumn
          className="ml-1.5"
          items={[
            { icon: <CopyIcon />, label: "复制", off: true },
            { icon: <PasteIcon />, label: "粘贴", menu: true, off: true },
            { icon: <DeleteIcon />, label: "删除", menu: true, off: true },
          ]}
        />
      </Group>
      <Group title="获取数据" className="pl-[7px] pr-2">
        <SmallColumn
          items={[
            { icon: <UserFeatureIcon />, label: "用户定义特征" },
            { icon: <CopyGeomIcon />, label: "复制几何" },
            { icon: <ShrinkIcon />, label: "收缩包络" },
          ]}
        />
      </Group>
      <Group title="元件" className="pl-0.5 pr-[3px]">
        <Big icon={<AssembleIcon />} lines={["组装", ""]} menu />
        <SmallColumn
          className="ml-1"
          items={[
            { icon: <CreateIcon />, label: "创建" },
            { icon: <RepeatIcon />, label: "重复", off: true },
          ]}
        />
        <span className="ml-2 mr-1 mt-2 h-14 w-px bg-[#dcdfe1]" />
        <Big icon={<DragIcon />} lines={["拖动", "元件"]} />
      </Group>
      <Group title="基准" className="gap-1 px-0.5">
        <Big icon={<PlaneIcon />} lines={["平面", ""]} />
        <SmallColumn
          items={[
            { icon: <AxisIcon />, label: "轴" },
            { icon: <PointIcon />, label: "点", menu: true },
            { icon: <CsysIcon />, label: "坐标系" },
          ]}
        />
        <Big icon={<SketchIcon />} lines={["草绘", ""]} />
      </Group>
      <Group title="切口和曲面" className="justify-center">
        <SmallColumn
          items={[
            { icon: <HoleIcon />, label: "孔" },
            { icon: <ExtrudeIcon />, label: "拉伸" },
            { icon: <RevolveIcon />, label: "旋转" },
          ]}
        />
      </Group>
      <Group title="修饰符" className="justify-center">
        <Big icon={<PatternIcon />} lines={["阵列", ""]} menu />
      </Group>
      <Group title="模型显示" className="px-1">
        <Big icon={<ManageViewIcon />} lines={["管理视", "图"]} menu />
        <Big icon={<SectionIcon />} lines={["截面", ""]} menu />
        <Big icon={<SphereIcon />} lines={["外观", "库"]} menu narrow />
        <SmallColumn
          className="ml-0.5 mr-1.5"
          items={[
            { icon: <ExplodeIcon />, label: "分解图" },
            { icon: <StatusIcon />, label: "切换状况", off: true },
            { icon: <EditPosIcon />, label: "编辑位置" },
          ]}
        />
        <Big icon={<CubeIcon />} lines={["显示样", "式"]} menu />
      </Group>
      <Group title="模型意图" className="pl-[3px] pr-1.5">
        <Big icon={<ComponentUiIcon />} lines={["元件", "界面"]} narrow />
        <Big icon={<PublishIcon />} lines={["发布", "几何"]} narrow />
        <Big icon={<FamilyTableIcon />} lines={["族表", ""]} narrow />
        <SmallColumn
          className="ml-1.5"
          items={[
            { icon: <ParamIcon />, label: "参数" },
            { icon: <SymbolIcon />, label: "切换符号" },
            { icon: <RelationIcon />, label: "关系" },
          ]}
        />
      </Group>
      <Group title="调查" menu={false} className="gap-px pl-0.5 pr-[3px]">
        <Big icon={<BomIcon />} lines={["物料", "清单"]} />
        <Big icon={<RefViewerIcon />} lines={["参考查", "看器"]} />
      </Group>
    </div>
  );
}

function Sidebar() {
  return (
    <aside className="flex w-[306px] shrink-0 flex-col bg-white px-1 pb-[11px] pt-[13px]">
      <div className="relative z-10 -mb-px flex h-[30px] items-stretch">
        <button aria-label="模型树" className="flex w-[30px] items-center justify-center border border-b-0 border-[#c3c7ca] bg-[#fcfdfd]"><TreeIcon /></button>
        <button aria-label="文件夹浏览器" className="flex w-[30px] items-center justify-center border border-l-0 border-[#c3c7ca] bg-[#e9ebef]"><FoldersIcon /></button>
        <button aria-label="收藏夹" className="flex w-[30px] items-center justify-center border border-l-0 border-[#c3c7ca] bg-[#e9ebef]"><FavFolderIcon /></button>
      </div>
      <div className="flex flex-1 flex-col border border-b-2 border-r-[3px] border-[#c3c7ca] bg-[#fcfdfd]">
        <div className="flex h-7 items-center pl-[19px] pr-1">
          <h2 className="flex-1 text-[13px] font-bold text-[#444]">模型树</h2>
          <button aria-label="设置" className="flex items-center gap-2"><ToolsIcon /><Caret /></button>
          <button aria-label="显示" className="ml-2.5 flex items-center gap-2"><TreeSettingsIcon /><Caret /></button>
        </div>
        <div className="flex h-[27px] items-center pr-1.5">
          <label className="flex h-full w-[198px] items-center border border-[#c3c7ca] bg-[#fafbfb]">
            <input aria-label="搜索模型树" className="h-[19px] w-full min-w-0 flex-1 bg-white pl-2 outline-none" />
            <button aria-label="清除" className="flex w-[30px] justify-center pb-1">
              <Svg w={9} h={9}><path d="M1 1l7 7M8 1L1 8" stroke="#888" /></Svg>
            </button>
          </label>
          <div className="ml-[7px] flex flex-1 items-center justify-between">
            <button aria-label="搜索选项"><Caret /></button>
            <button aria-label="查找"><BinocularsIcon /></button>
            <button aria-label="过滤"><FunnelIcon /></button>
            <button aria-label="添加"><PlusIcon /></button>
          </div>
        </div>
        <ul className="mt-1 flex-1 border-t border-[#c3c7ca] text-[11px] text-[#555]">
          <li className="flex h-4 items-center gap-[3px] pl-[5px]"><AsmIcon />0508_03_CUP.ASM</li>
          <li className="flex h-4 items-center gap-[3px] pl-[25px]"><PartIcon />0508_06_KOU60.PRT</li>
          <li className="flex h-4 items-center gap-[3px] pl-2.5">
            <button aria-label="展开" className="w-3">
              <Svg w={8} h={9}><path d="M0 0v9l7.500-4.500z" fill="#888" /></Svg>
            </button>
            <AsmIcon />0508_03GAIZI.ASM
          </li>
        </ul>
      </div>
    </aside>
  );
}

function CupModel() {
  return (
    <svg width="190" height="190" viewBox="-95 -95 190 190" fill="none" role="img" aria-label="0508_03_CUP">
      <defs>
        <linearGradient id="rim" x1=".3" y1="0" x2=".7" y2="1">
          <stop offset="0" stopColor="#a0a9b4" />
          <stop offset=".5" stopColor="#828a94" />
          <stop offset=".85" stopColor="#6a727b" />
          <stop offset="1" stopColor="#4a5057" />
        </linearGradient>
        <radialGradient id="edge" cx=".47" cy=".47" r=".53">
          <stop offset=".9" stopColor="#23282b" stopOpacity="0" />
          <stop offset="1" stopColor="#23282b" stopOpacity=".6" />
        </radialGradient>
        <linearGradient id="face" x1=".4" y1="0" x2=".6" y2="1">
          <stop offset="0" stopColor="#8b939c" />
          <stop offset="1" stopColor="#949ea8" />
        </linearGradient>
        <radialGradient id="shade" cx=".42" cy=".25" r=".5">
          <stop offset="0" stopColor="#72787e" stopOpacity=".9" />
          <stop offset="1" stopColor="#7f868e" stopOpacity="0" />
        </radialGradient>
        <radialGradient id="glow" cx=".42" cy=".84" r=".45">
          <stop offset="0" stopColor="#b0bbc5" stopOpacity=".9" />
          <stop offset="1" stopColor="#a0aab4" stopOpacity="0" />
        </radialGradient>
      </defs>
      <circle r="92.500" fill="url(#rim)" />
      <circle r="92.500" fill="url(#edge)" />
      <circle r="84" fill="url(#face)" />
      <circle r="84" fill="url(#shade)" />
      <circle r="84" fill="url(#glow)" />
      <circle r="84" stroke="#1d2430" strokeWidth="1.200" strokeDasharray="9 1 4 1" />
      <circle r="81" stroke="#1d2430" strokeWidth="1.200" strokeDasharray="5 1 3 1" />
      <path d="M-59 0h25" stroke="#e0525a" />
      <path d="M-34 0v25" stroke="#4fe3e3" strokeWidth="1.500" />
      <rect x="-61" y="-2" width="5" height="4" rx="1" fill="#ff2436" />
      <rect x="-36" y="-2" width="4" height="4" fill="#3fd05a" />
      <circle cx="-34" cy="25" r="3" fill="#28eeea" />
    </svg>
  );
}

function StatusBar() {
  return (
    <footer className="box-content flex h-[35px] items-center border-t-2 border-[#909394] bg-[#eeeff1]">
      <div className="flex items-center gap-1 pl-1.5 pt-2">
        <button aria-label="模型树" className="flex h-[22px] w-[22px] items-center justify-center border border-[#a9adb3] bg-gradient-to-b from-[#dfe1e6] to-white"><TreeIcon color="#1b2c55" /></button>
        <button aria-label="浏览器" className="flex h-[22px] w-[22px] items-center justify-center border border-[#c9ccd0] bg-[#f6f7f8]"><GlobeIcon /></button>
        <span className="ml-1.5 h-5 w-px bg-[#d0d3d5]" />
      </div>
      <div className="ml-auto flex items-center pr-[18px]">
        <div className="flex h-8 items-center gap-[7px] border-l border-[#d6d9db] pl-[7px]">
          <button aria-label="重新调整"><RefitIcon /></button>
          <button aria-label="放大"><Magnifier sign="M3.500 6.500h6M6.500 3.500v6" /></button>
          <button aria-label="缩小"><Magnifier sign="M3.500 6.500h6" /></button>
          <button aria-label="重画"><RepaintIcon /></button>
          <button aria-label="显示样式" className="flex items-center gap-2"><SmallCubeIcon /><Caret /></button>
          <button aria-label="已保存方向" className="flex items-center gap-2"><SavedViewsIcon /><Caret /></button>
          <button aria-label="视图管理器"><CameraListIcon /></button>
          <button aria-label="基准显示" className="flex items-center gap-2"><DatumIcon /><Caret /></button>
        </div>
        <div className="ml-1 mr-8 flex h-6 border border-[#bfc2c6] bg-gradient-to-b from-[#dcdee2] to-[#f4f5f6]">
          <button aria-label="注释显示" className="flex w-6 items-center justify-center border-r border-[#bfc2c6]"><AnnotationIcon /></button>
          <button aria-label="旋转中心" className="flex w-6 items-center justify-center"><SpinCenterIcon /></button>
        </div>
        <div className="flex h-8 w-[34px] items-center justify-center gap-[3px] border-x border-[#d6d9db]">
          <span className="h-2.5 w-2.5 rounded-full bg-[#41cf45]" />
          <span className="h-[5px] w-[5px] rounded-full bg-[#c6c8ca]" />
          <span className="h-[5px] w-[5px] rounded-full bg-[#c6c8ca]" />
        </div>
        <button aria-label="查找" className="ml-0.5 flex h-7 w-10 items-center justify-center rounded-xs border border-[#b9bcc0] bg-gradient-to-b from-white to-[#e8eaec]"><BinocularsIcon /></button>
        <button aria-label="选择" className="ml-1.5 flex h-7 w-10 items-center justify-center rounded-xs border border-[#b9bcc0] bg-gradient-to-b from-white to-[#e8eaec]"><SelectBoxIcon /></button>
        <div className="relative ml-24 w-[166px]">
          <select aria-label="选择过滤器" className="block h-5 w-full appearance-none border border-[#bfc2c6] bg-gradient-to-b from-[#e9ebed] to-white pl-1 text-[#444] outline-none">
            <option>智能</option>
          </select>
          <span className="pointer-events-none absolute inset-y-0 right-0 flex w-[15px] items-center justify-center border border-[#bfc2c6] bg-[#f1f2f4]"><Caret /></span>
        </div>
      </div>
    </footer>
  );
}

export default function App() {
  return (
    <div className="flex h-screen flex-col overflow-hidden border-x-4 border-b-4 border-[#c6cacc] bg-[#fcfdfd] font-['Liberation_Sans','Noto_Sans_CJK_SC',sans-serif] text-xs text-[#333]">
      <div className="flex h-1 shrink-0 justify-between bg-[#c1c6c9]">
        <span className="w-[16%] bg-gradient-to-b from-[#6e7375] to-[#b3b8bb]" />
        <span className="w-[16%] bg-gradient-to-b from-[#6e7375] to-[#b3b8bb]" />
      </div>
      <TitleBar />
      <TabBar />
      <Ribbon />
      <div className="flex min-h-0 flex-1">
        <Sidebar />
        <main className="mr-1 flex flex-1 items-center justify-center bg-[#282c2d] pl-16">
          <CupModel />
        </main>
      </div>
      <StatusBar />
    </div>
  );
}
